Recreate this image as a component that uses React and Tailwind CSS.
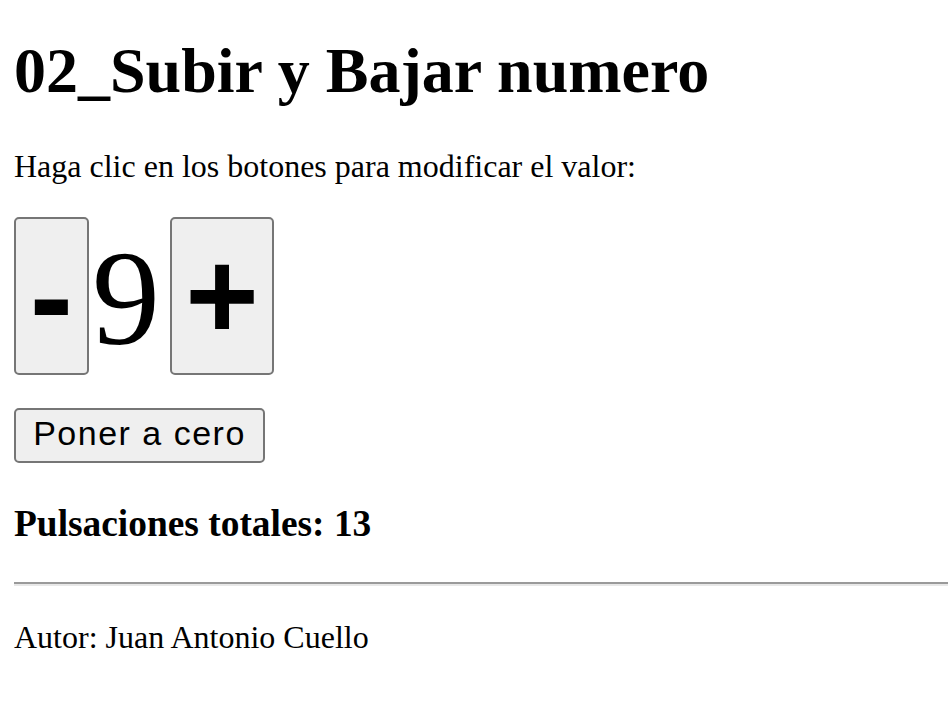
import { useState } from 'react';

export default function App() {
  const [value, setValue] = useState(9);
  const [clicks, setClicks] = useState(13);

  const change = (delta) => {
    setValue(v => v + delta);
    setClicks(c => c + 1);
  };

  const reset = () => {
    setValue(0);
    setClicks(c => c + 1);
  };

  return (
    <div className="min-h-screen bg-white pl-[14px] text-black font-['Liberation_Serif',serif]">
      <h1 className="pt-[34px] text-[64px] leading-[74px] font-bold">02_Subir y Bajar numero</h1>

      <p className="mt-[40px] text-[32px] leading-[37px]">Haga clic en los botones para modificar el valor:</p>

      <div className="mt-[32px] flex items-start">
        <button
          onClick={() => change(-1)}
          className="w-[75px] h-[158px] bg-[#efefef] border-2 border-[#767676] rounded-[5px] text-[130px] leading-[150px] font-bold font-['Liberation_Sans',sans-serif] text-center"
        >
          -
        </button>
        <span className="w-[81px] h-[158px] pl-[3px] text-[136px] leading-[162px]">{value}</span>
        <button
          onClick={() => change(1)}
          className="w-[104px] h-[158px] bg-[#efefef] border-2 border-[#767676] rounded-[5px] text-[126px] leading-[150px] font-bold font-['Liberation_Sans',sans-serif] text-center"
        >
          +
        </button>
      </div>

      <button
        onClick={reset}
        className="mt-[33px] w-[251px] h-[55px] pb-[5px] flex items-center justify-center bg-[#efefef] border-2 border-[#767676] rounded-[5px] text-[34px] tracking-[1.5px] font-['Liberation_Sans',sans-serif]"
      >
        Poner a cero
      </button>

      <h3 className="mt-[39px] text-[37.4px] leading-[43px] font-bold">Pulsaciones totales: {clicks}</h3>

      <hr className="mt-[37px] h-0 border-t-2 border-b-2 border-t-[#9a9a9a] border-b-[#e8e8e8]" />

      <p className="mt-[33px] text-[32px] leading-[37px]">Autor: Juan Antonio Cuello</p>
    </div>
  );
}
